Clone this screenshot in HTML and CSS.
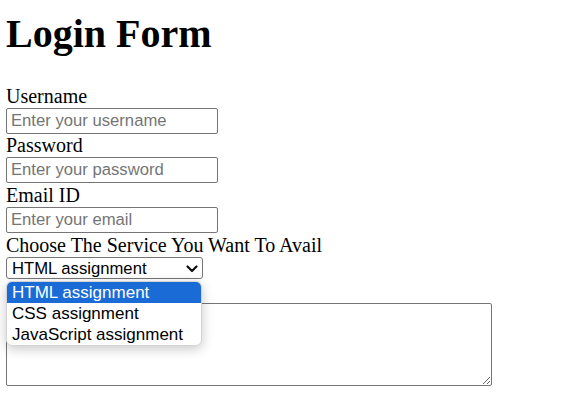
FILE: index.html
```html
<!DOCTYPE html>
<html lang="en">
<head>
<meta charset="utf-8">
<title>Login Form</title>
<link rel="stylesheet" href="styles.css">
</head>
<body>
<main class="page">
  <h1 class="title">Login Form</h1>
  <form class="form">
    <label class="label label-first" for="username">Username</label>
    <input class="field" id="username" type="text" placeholder="Enter your username">
    <label class="label" for="password">Password</label>
    <input class="field" id="password" type="password" placeholder="Enter your password">
    <label class="label label-tall" for="email">Email ID</label>
    <input class="field" id="email" type="email" placeholder="Enter your email">
    <label class="label label-tall" for="service">Choose The Service You Want To Avail</label>
    <div class="select-wrap">
      <select class="select" id="service">
        <option>HTML assignment</option>
        <option>CSS assignment</option>
        <option>JavaScript assignment</option>
      </select>
      <svg class="chevron" width="12" height="8" viewBox="0 0 12 8" aria-hidden="true">
        <path d="M1.5 1.5 L6 6 L10.5 1.5" fill="none" stroke="#111" stroke-width="2.2" stroke-linecap="round" stroke-linejoin="round"/>
      </svg>
      <ul class="popup">
        <li class="option option-active">HTML assignment</li>
        <li class="option">CSS assignment</li>
        <li class="option">JavaScript assignment</li>
      </ul>
    </div>
    <div class="spacer"></div>
    <textarea class="message"></textarea>
  </form>
</main>
</body>
</html>
```

FILE: styles.css
```css
html, body {
  margin: 0;
  padding: 0;
  background: #ffffff;
}

body {
  font-family: "Liberation Serif", "Times New Roman", serif;
  color: #000;
  overflow: hidden;
}

.page {
  padding: 12px 0 0 6px;
}

.title {
  margin: 0;
  font-size: 40px;
  line-height: 44px;
  font-weight: bold;
  height: 44px;
}

.form {
  display: flex;
  flex-direction: column;
  align-items: flex-start;
}

.label {
  display: block;
  font-size: 20px;
  line-height: 23px;
  height: 23px;
  white-space: nowrap;
}

.label-first {
  margin-top: 29px;
}

.label-tall {
  line-height: 24px;
  height: 24px;
}

.field {
  box-sizing: border-box;
  width: 212px;
  height: 26px;
  margin: 0;
  padding: 0 4px;
  border: 1px solid #767676;
  border-radius: 2px;
  font-family: "Liberation Sans", Arial, sans-serif;
  font-size: 16.67px;
  color: #000;
  background: #fff;
  outline: none;
}

.field::placeholder {
  color: #757575;
  opacity: 1;
}

.select-wrap {
  position: relative;
  width: 197px;
  height: 22px;
}

.select {
  box-sizing: border-box;
  -webkit-appearance: none;
  appearance: none;
  width: 197px;
  height: 22px;
  margin: 0;
  padding: 0 0 0 5px;
  border: 1px solid #767676;
  border-radius: 3px;
  background: #fff;
  font-family: "Liberation Sans", Arial, sans-serif;
  font-size: 16.67px;
  color: #000;
  outline: none;
}

.chevron {
  position: absolute;
  left: 180px;
  top: 8px;
  pointer-events: none;
}

.popup {
  position: absolute;
  left: 0;
  top: 24px;
  z-index: 5;
  box-sizing: border-box;
  width: 196px;
  margin: 0;
  padding: 0;
  list-style: none;
  background: #fff;
  border: 1px solid #d4d4d4;
  border-radius: 6px;
  overflow: hidden;
  box-shadow: 0 3px 12px rgba(0, 0, 0, 0.22);
}

.option {
  height: 21px;
  line-height: 21px;
  padding-left: 5px;
  font-family: "Liberation Sans", Arial, sans-serif;
  font-size: 17px;
  color: #000;
  white-space: nowrap;
}

.option-active {
  background: #1b6bd7;
  color: #fff;
}

.spacer {
  height: 24px;
}

.message {
  box-sizing: border-box;
  display: block;
  width: 486px;
  height: 83px;
  margin: 0;
  border: 1px solid #767676;
  border-radius: 2px;
  background: #fff;
  outline: none;
}
```
